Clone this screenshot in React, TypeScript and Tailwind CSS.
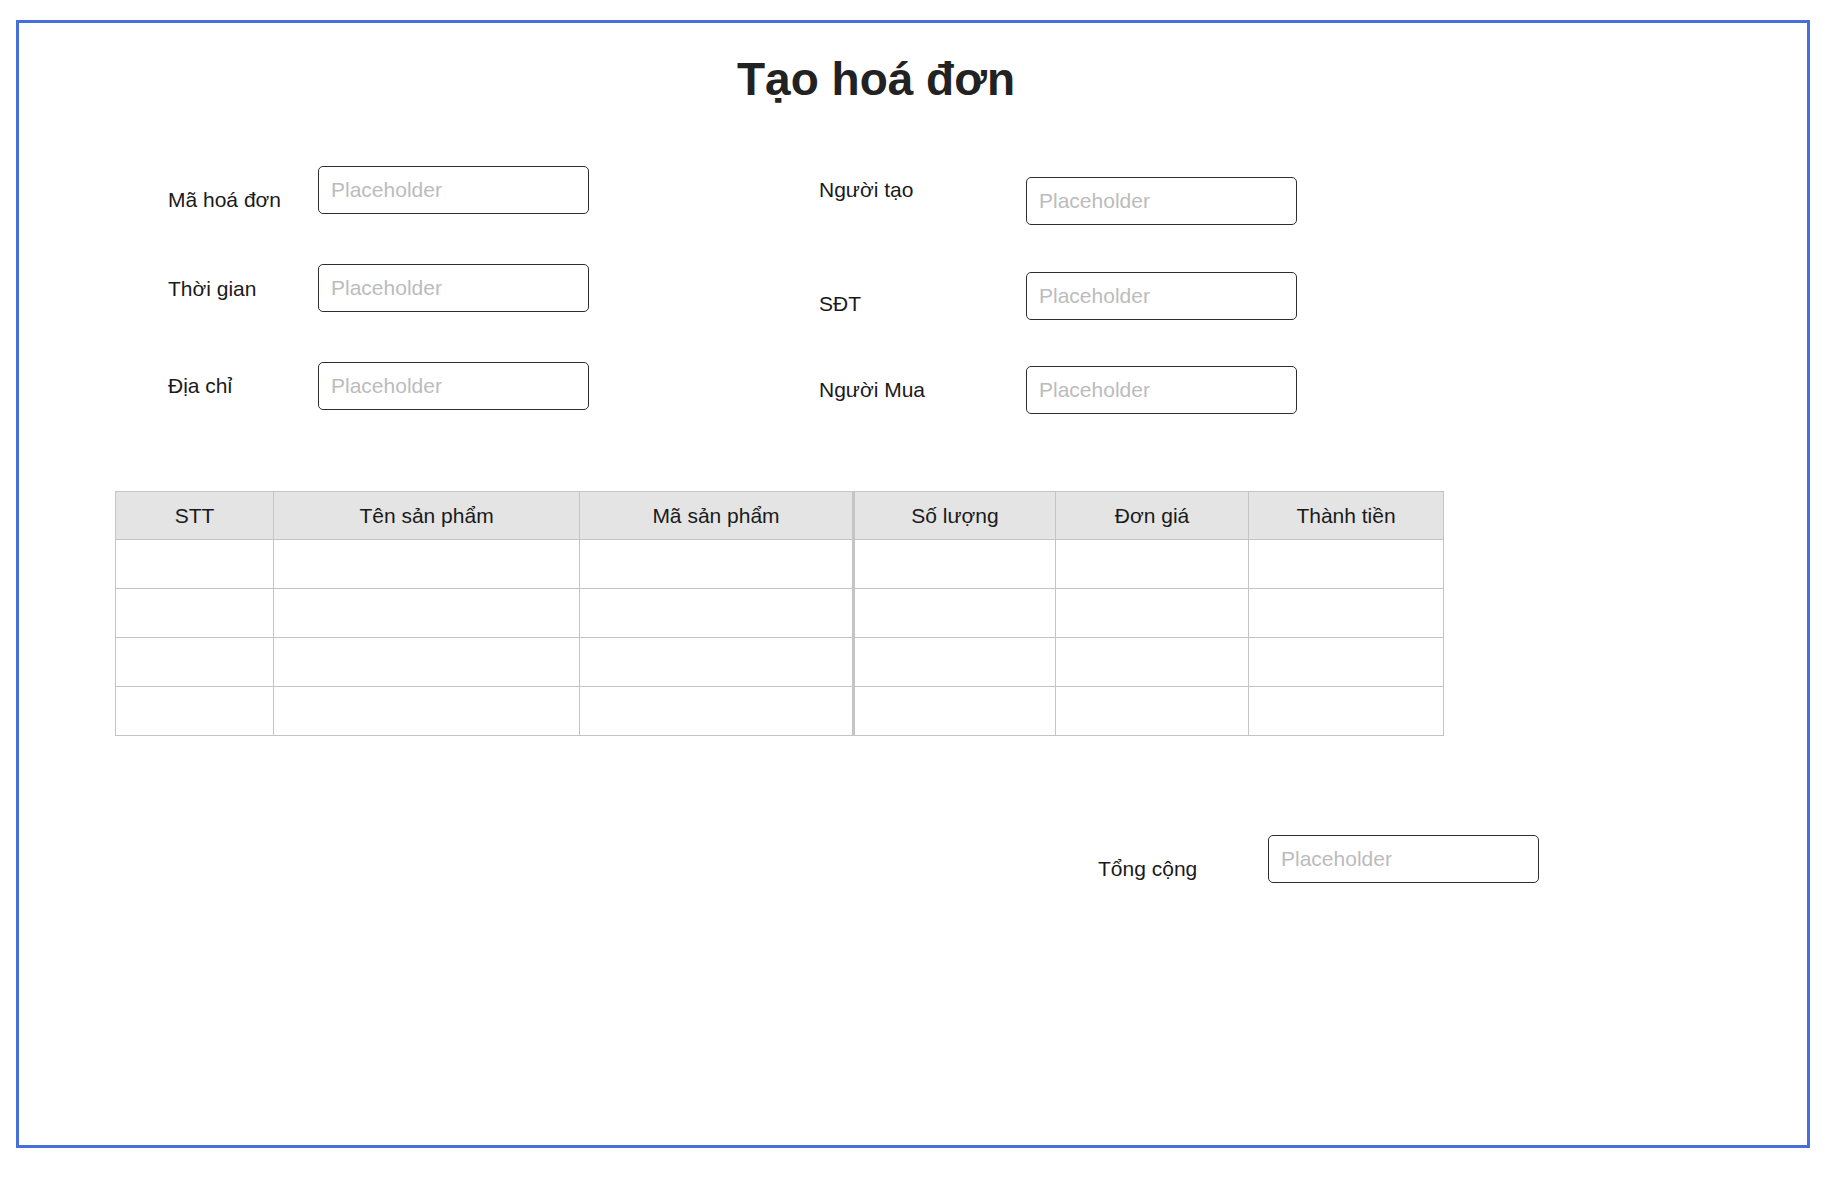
const font = { fontFamily: '"Liberation Sans", Arial, Helvetica, sans-serif' };

function Field({ className = "" }: { className?: string }) {
  return (
    <input
      placeholder="Placeholder"
      className={`h-[48px] w-[271px] shrink-0 rounded-[5px] border-[1.5px] border-[#2e2e2e] bg-white px-[12px] text-[21px] text-[#222] placeholder:text-[#bcbcbc] outline-none ${className}`}
    />
  );
}

const columns = [
  { name: "STT", w: "w-[158px]" },
  { name: "Tên sản phẩm", w: "w-[306px]" },
  { name: "Mã sản phẩm", w: "w-[274px]" },
  { name: "Số lượng", w: "w-[202px]" },
  { name: "Đơn giá", w: "w-[193px]" },
  { name: "Thành tiền", w: "w-[195px]" },
];

export default function App() {
  return (
    <div className="min-h-screen bg-white pl-[16px] pt-[20px]" style={font}>
      <div className="flex h-[1128px] w-[1794px] flex-col border-[3px] border-[#476fdb] bg-white">
        {/* tiêu đề */}
        <div className="flex justify-center pr-[74px] pt-[33px]">
          <h1 className="text-[46px] font-bold leading-[46px] text-[#222]">Tạo hoá đơn</h1>
        </div>

        {/* thông tin */}
        <div className="mt-[64px] flex items-start pl-[149px] text-[21px] leading-[24px] text-[#1a1a1a]">
          <div className="flex flex-col gap-[50px]">
            <div className="flex items-start">
              <span className="mt-[22px] w-[150px]">Mã hoá đơn</span>
              <Field />
            </div>
            <div className="flex items-start">
              <span className="mt-[13px] w-[150px]">Thời gian</span>
              <Field />
            </div>
            <div className="flex items-start">
              <span className="mt-[12px] w-[150px]">Địa chỉ</span>
              <Field />
            </div>
          </div>

          <div className="ml-[230px] mt-[11px] flex flex-col">
            <div className="flex items-start">
              <span className="mt-[1px] w-[207px]">Người tạo</span>
              <Field />
            </div>
            <div className="mt-[47px] flex items-start">
              <span className="mt-[20px] w-[207px]">SĐT</span>
              <Field />
            </div>
            <div className="mt-[46px] flex items-start">
              <span className="mt-[12px] w-[207px]">Người Mua</span>
              <Field />
            </div>
          </div>
        </div>

        {/* bảng sản phẩm */}
        <div className="ml-[96px] mt-[77px]">
          <table className="border-collapse text-[21px] text-[#1a1a1a]">
            <thead>
              <tr className="h-[48px] bg-[#e4e4e4]">
                {columns.map((c, i) => (
                  <th
                    key={c.name}
                    className={`${c.w} border-[1.5px] border-[#c4c4c4] font-normal ${i === 3 ? "border-l-[3px]" : ""}`}
                  >
                    {c.name}
                  </th>
                ))}
              </tr>
            </thead>
            <tbody>
              {[0, 1, 2, 3].map((r) => (
                <tr key={r} className="h-[49px]">
                  {columns.map((c, i) => (
                    <td
                      key={c.name}
                      className={`border-[1.5px] border-[#c4c4c4] ${i === 3 ? "border-l-[3px]" : ""}`}
                    />
                  ))}
                </tr>
              ))}
            </tbody>
          </table>
        </div>

        {/* tổng cộng */}
        <div className="ml-[1079px] mt-[99px] flex items-start text-[21px] leading-[24px] text-[#1a1a1a]">
          <span className="mt-[22px] w-[170px]">Tổng cộng</span>
          <Field />
        </div>
      </div>
    </div>
  );
}
